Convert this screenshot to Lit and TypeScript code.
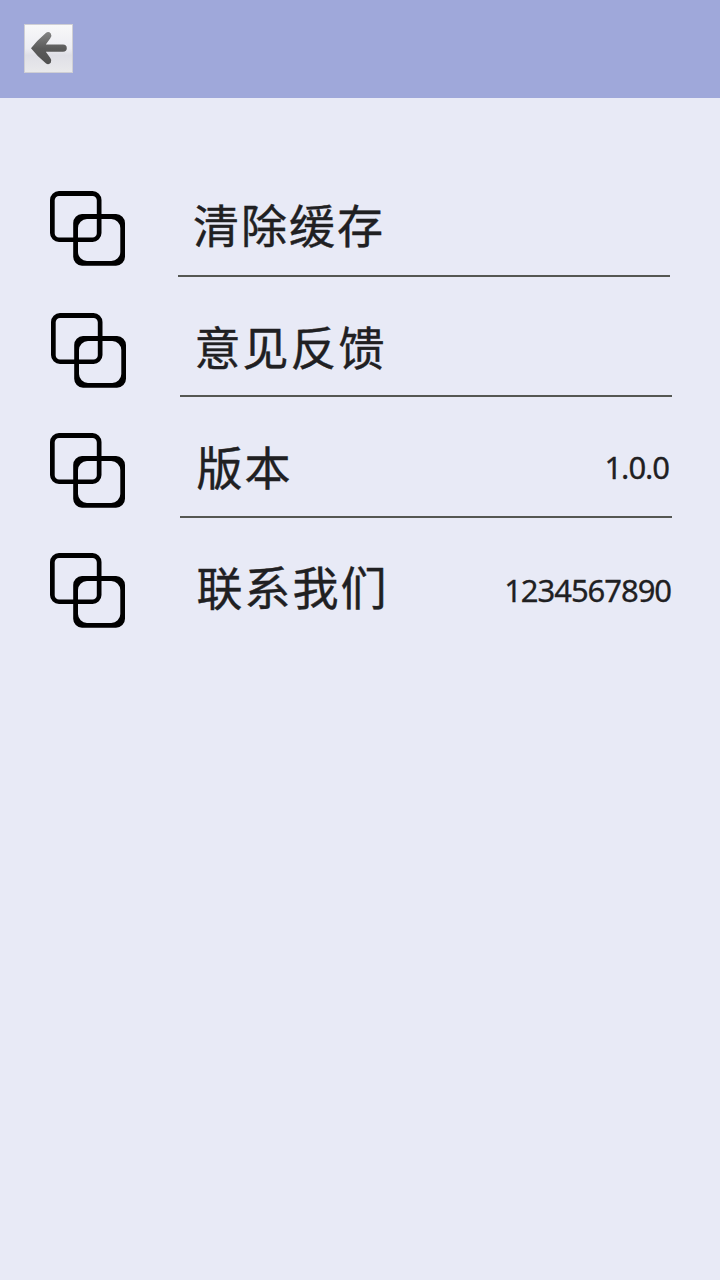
import { LitElement, html, css, nothing } from "lit";
import { customElement, property } from "lit/decorators.js";

@customElement("overlap-icon")
class OverlapIcon extends LitElement {
  static styles = css`
    :host { display: block; width: 75px; height: 75px; }
    svg { display: block; }
  `;
  render() {
    return html`<svg width="75" height="75" viewBox="0 0 75 75" fill="#000" fill-rule="evenodd">
      <path d="M9 0H42.5A9 9 0 0 1 51.5 9V42A9 9 0 0 1 42.5 51H9A9 9 0 0 1 0 42V9A9 9 0 0 1 9 0ZM9 5A4.3 4.3 0 0 0 4.7 9.3V42.2A4.3 4.3 0 0 0 9 46.5H42.5A4.3 4.3 0 0 0 46.8 42.2V9.3A4.3 4.3 0 0 0 42.5 5Z"/>
      <path d="M32 23H66A9 9 0 0 1 75 32V65.7A9 9 0 0 1 66 74.7H32A9 9 0 0 1 23.2 65.7V32A9 9 0 0 1 32 23ZM37 28A9 9 0 0 0 28 37V61A9 9 0 0 0 37 70H61.3A9 9 0 0 0 70.3 61V37A9 9 0 0 0 61.3 28Z"/>
    </svg>`;
  }
}

@customElement("setting-row")
class SettingRow extends LitElement {
  @property() label = "";
  @property() value = "";
  static styles = css`
    :host {
      display: grid;
      grid-template-columns: 75px 492px;
      column-gap: 55px;
      box-sizing: border-box;
      height: 121px;
      padding-left: 50px;
      color: #202022;
    }
    overlap-icon { margin-top: var(--icon-top, 36px); margin-left: var(--icon-shift, 0px); }
    .body {
      display: flex;
      justify-content: space-between;
      align-items: flex-start;
      box-sizing: border-box;
      border-bottom: 2px solid var(--rule, #555753);
      padding: var(--text-top, 31px) var(--value-right, 3px) 0 var(--text-left, 16.5px);
      white-space: nowrap;
    }
    .label {
      font-size: 46px;
      line-height: 72px;
      letter-spacing: 2px;
      -webkit-text-stroke: 0.4px currentColor;
    }
    .value {
      padding-top: var(--value-top, 2px);
      font-family: "Noto Sans", sans-serif;
      font-size: 31px;
      line-height: 72px;
      letter-spacing: -1.05px;
      -webkit-text-stroke: 0.3px currentColor;
    }
  `;
  render() {
    return html`<overlap-icon></overlap-icon>
      <div class="body">
        <span class="label">${this.label}</span>
        ${this.value ? html`<span class="value">${this.value}</span>` : nothing}
      </div>`;
  }
}

@customElement("app-root")
class AppRoot extends LitElement {
  static styles = css`
    :host {
      display: block;
      height: 1280px;
      overflow: hidden;
      background: #e8eaf6;
      font-family: "Noto Sans CJK SC", sans-serif;
    }
    header {
      display: flex;
      align-items: center;
      box-sizing: border-box;
      height: 98px;
      padding: 0 24px 1px;
      background: #9fa8da;
    }
    button {
      display: block;
      box-sizing: border-box;
      width: 49px;
      height: 49px;
      padding: 0;
      border: 1px solid #cfcfd4;
      background: linear-gradient(#f8f8f9 0%, #ededf2 50%, #dfdfe6 64%, #e9e9eb 100%);
    }
    button svg { display: block; }
    main { display: flex; flex-direction: column; padding-top: 58px; }
    .cache { height: 121px; margin-left: -2px; --icon-shift: 2px; --icon-top: 35px; --text-left: 15px; }
    .feedback { height: 120px; --icon-shift: 1px; --text-left: 14.5px; --text-top: 32px; }
    .version { --text-top: 32px; --value-right: 3px; }
    .contact { --icon-top: 35px; --rule: transparent; --value-right: 1px; --value-top: 5px; }
  `;
  render() {
    return html`
      <header>
        <button aria-label="返回">
          <svg width="47" height="47" viewBox="0 0 47 47">
            <defs>
              <linearGradient id="arrow" x1="0" y1="0" x2="0" y2="1">
                <stop offset="0" stop-color="#858585"/>
                <stop offset=".5" stop-color="#5b5b5b"/>
                <stop offset="1" stop-color="#505050"/>
              </linearGradient>
            </defs>
            <path fill="url(#arrow)" d="M6 23.2Q12 15.5 20.8 8Q23.5 6 25.8 8.5Q27.3 11 25.3 13.3L20.8 19.6H38Q41.8 19.8 41.8 23.2T38 26.7H20.8L25.3 33Q27.3 35.5 25.8 37.8Q23.5 40.3 20.8 38.3Q12 31 6 23.2Z"/>
          </svg>
        </button>
      </header>
      <main>
        <setting-row class="cache" label="清除缓存"></setting-row>
        <setting-row class="feedback" label="意见反馈"></setting-row>
        <setting-row class="version" label="版本" value="1.0.0"></setting-row>
        <setting-row class="contact" label="联系我们" value="1234567890"></setting-row>
      </main>`;
  }
}
